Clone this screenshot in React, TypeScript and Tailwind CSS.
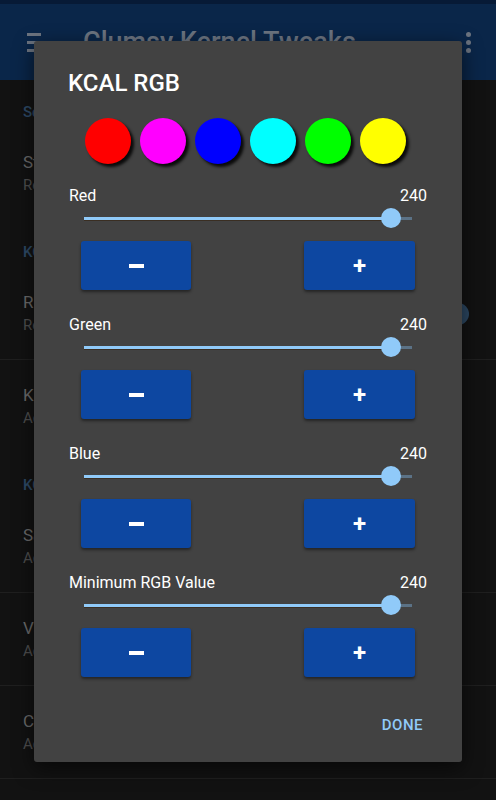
import React from "react";

const font = { fontFamily: "Roboto, 'Noto Sans', sans-serif" };

function BgItem({ title, sub, divider }: { title: string; sub: string; divider?: boolean }) {
  return (
    <div className={`h-[93px] flex flex-col justify-center pl-[23px] ${divider ? "border-b border-[#1f1f1f]" : ""}`}>
      <div className="text-[17px] leading-[23px] text-[#6a6a6a]">{title}</div>
      <div className="text-[15px] leading-[22px] text-[#4e4e4e]">{sub}</div>
    </div>
  );
}

function Header({ text }: { text: string }) {
  return <div className="h-[47px] pl-[23px] pt-[21px] text-[15px] font-medium text-[#2e4a66]">{text}</div>;
}

function Section({ label }: { label: string }) {
  return (
    <div className="flex flex-col mb-[25px]">
      <div className="flex justify-between h-5 text-base leading-5 text-white px-[35px]">
        <span>{label}</span>
        <span>240</span>
      </div>
      <div className="relative h-5 mt-[2px] mx-[50px]">
        <div className="absolute left-0 top-[9px] h-[3px] w-[307px] bg-[#90caf9] shadow-[0_1px_0_#3a2e22]" />
        <div className="absolute left-[307px] right-0 top-[9px] h-[3px] bg-[#5b7286]" />
        <div className="absolute left-[297px] top-[0px] w-5 h-5 rounded-full bg-[#90caf9]" />
      </div>
      <div className="flex justify-between mt-[13px] px-[47px]">
        <div className="w-[110px] h-[49px] rounded-[3px] bg-[#0d47a1] shadow-[0_2px_3px_rgba(0,0,0,0.45)] flex items-center justify-center">
          <div className="w-[15px] h-[4px] bg-white" />
        </div>
        <div className="w-[111px] h-[49px] rounded-[3px] bg-[#0d47a1] shadow-[0_2px_3px_rgba(0,0,0,0.45)] flex items-center justify-center">
          <span className="text-white font-bold text-[24px] leading-none">+</span>
        </div>
      </div>
    </div>
  );
}

export default function App() {
  const colors = ["#ff0000", "#ff00ff", "#0000ff", "#00ffff", "#00ff00", "#ffff00"];
  return (
    <div style={font} className="relative w-[496px] h-[800px] overflow-hidden bg-[#121212]">
      {/* background app */}
      <div className="h-[4px] bg-[#071a36]" />
      <div className="h-[76px] bg-[#0a2649] flex items-center px-[27px]">
        <div className="flex flex-col gap-[5px] w-[14px]">
          <div className="h-[3px] bg-[#6c7480]" />
          <div className="h-[3px] bg-[#6c7480]" />
          <div className="h-[3px] bg-[#6c7480]" />
        </div>
        <div className="ml-[42px] text-[27px] leading-[32px] font-medium text-[#6c7480] whitespace-nowrap">Clumsy Kernel Tweaks</div>
        <div className="ml-auto flex flex-col gap-[3px] mr-[-2px]">
          <div className="w-[5px] h-[5px] rounded-full bg-[#6c7480]" />
          <div className="w-[5px] h-[5px] rounded-full bg-[#6c7480]" />
          <div className="w-[5px] h-[5px] rounded-full bg-[#6c7480]" />
        </div>
      </div>
      <div className="flex flex-col">
        <Header text="Screen" />
        <BgItem title="Start on boot" sub="Restore settings on boot" />
        <Header text="KCAL" />
        <div className="relative">
          <BgItem title="RGB Enabled" sub="Restore color control" divider />
          <div className="absolute right-[27px] top-[36px] w-[22px] h-[22px] rounded-full bg-[#2c4863]" />
        </div>
        <BgItem title="KCAL RGB" sub="Adjust the red, green and blue" />
        <Header text="KCAL" />
        <BgItem title="Saturation" sub="Adjust the saturation" divider />
        <BgItem title="Value" sub="Adjust the value" divider />
        <BgItem title="Contrast" sub="Adjust the contrast" divider />
      </div>

      {/* dialog */}
      <div className="absolute left-[34px] top-[41px] w-[428px] h-[721px] bg-[#424242] rounded-[3px] shadow-[0_6px_20px_rgba(0,0,0,0.6)] flex flex-col">
        <div className="mt-[28px] ml-[34px] text-[24px] leading-[28px] font-medium text-white">KCAL RGB</div>
        <div className="mt-[21px] ml-[51px] flex gap-[9px]">
          {colors.map((c) => (
            <div
              key={c}
              className="w-[46px] h-[46px] rounded-full shadow-[3px_3px_3px_rgba(0,0,0,0.85)]"
              style={{ backgroundColor: c }}
            />
          ))}
        </div>
        <div className="mt-[22px] flex flex-col">
          <Section label="Red" />
          <Section label="Green" />
          <Section label="Blue" />
          <Section label="Minimum RGB Value" />
        </div>
        <div className="flex justify-end pr-[39px] mt-[12px]">
          <span className="text-[15px] font-medium text-[#90caf9] tracking-[0.5px]">DONE</span>
        </div>
      </div>
    </div>
  );
}
